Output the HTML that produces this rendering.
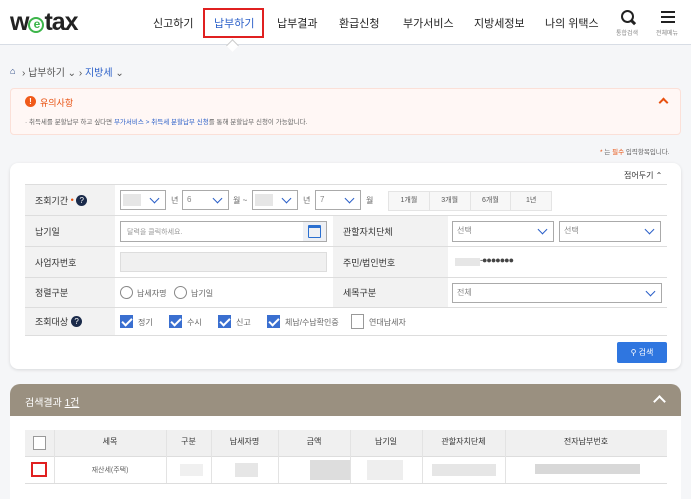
<!DOCTYPE html><html><head><meta charset="utf-8"><style>
*{box-sizing:border-box;margin:0;padding:0}
body{width:691px;height:499px;overflow:hidden;background:#f5f6f8;font-family:"Liberation Sans","Noto Sans CJK KR",sans-serif;color:#333;position:relative}
.a{position:absolute}
.hdr{left:0;top:0;width:691px;height:45px;background:#fff;border-bottom:1px solid #d8dde5}
.nav{font-size:11px;color:#222;top:15px}
.sm{font-size:8px;color:#888}
.lbl{background:#f2f2f2;font-size:9px;color:#333;padding-left:10px;display:flex;align-items:center}
.sel{border:1px solid #aaa;background:#fff;height:20px;font-size:8px;color:#888;padding-left:4px;line-height:18px}
.sel:after{content:"";position:absolute;right:7px;top:4px;width:6px;height:6px;border-right:1.5px solid #2a5fc8;border-bottom:1.5px solid #2a5fc8;transform:rotate(45deg)}
.cb{width:13px;height:13px;background:#3a6fd0;border:1px solid #3a6fd0}
.cb:after{content:"";position:absolute;left:3px;top:0px;width:4px;height:8px;border-right:2px solid #fff;border-bottom:2px solid #fff;transform:rotate(45deg)}
.t{font-size:8px;color:#666}
.th{font-size:8px;color:#333;text-align:center;top:436px}
.blur{background:#e6e6e6}
</style></head><body>
<div class="a hdr"></div>
<div class="a" style="left:10px;top:8px;font-size:25px;font-weight:bold;color:#222;letter-spacing:-1px">w<span style="display:inline-block;width:16px;height:16px;border:2.5px solid #3cb54a;border-radius:50%;font-size:12px;line-height:11px;text-align:center;color:#3cb54a;vertical-align:2px">e</span>tax</div>
<div class="a nav" style="left:153px">신고하기</div>
<div class="a" style="left:203px;top:8px;width:61px;height:30px;border:2px solid #e02020"></div>
<div class="a nav" style="left:214px;color:#2a5fc8">납부하기</div>
<div class="a" style="left:228px;top:41px;width:9px;height:9px;border-left:1px solid #ccc;border-top:1px solid #ccc;background:#fff;transform:rotate(45deg)"></div>
<div class="a nav" style="left:277px">납부결과</div>
<div class="a nav" style="left:339px">환급신청</div>
<div class="a nav" style="left:403px">부가서비스</div>
<div class="a nav" style="left:474px">지방세정보</div>
<div class="a nav" style="left:545px">나의 위택스</div>
<div class="a" style="left:621px;top:10px;width:13px;height:13px;border:2.5px solid #222;border-radius:50%"></div>
<div class="a" style="left:631px;top:21px;width:5px;height:2.5px;background:#222;transform:rotate(45deg)"></div>
<div class="a sm" style="left:616px;top:28px;font-size:6px">통합검색</div>
<div class="a" style="left:661px;top:11px;width:14px;height:2px;background:#222;box-shadow:0 5px 0 #222,0 10px 0 #222"></div>
<div class="a sm" style="left:656px;top:28px;font-size:6px">전체메뉴</div>
<div class="a" style="left:10px;top:66px;font-size:9px;color:#1a3a7a">⌂</div>
<div class="a" style="left:22px;top:64px;font-size:10px;color:#555">› 납부하기 ⌄ › <span style="color:#2a5fc8">지방세</span> ⌄</div>
<div class="a" style="left:10px;top:88px;width:671px;height:47px;background:#fff7f5;border:1px solid #fbe0d8;border-radius:4px"></div>
<div class="a" style="left:25px;top:96px;width:11px;height:11px;border-radius:50%;background:#f05a1a;color:#fff;font-size:8px;text-align:center;line-height:11px;font-weight:bold">!</div>
<div class="a" style="left:40px;top:96px;font-size:9px;color:#e8500e">유의사항</div>
<div class="a" style="left:660px;top:99px;width:7px;height:7px;border-left:2px solid #e8500e;border-top:2px solid #e8500e;transform:rotate(45deg)"></div>
<div class="a t" style="left:25px;top:116px;font-size:6.5px">· 취득세를 분할납부 하고 싶다면 <span style="color:#2a5fc8">부가서비스 &gt; 취득세 분할납부 신청</span>를 통해 분할납부 신청이 가능합니다.</div>
<div class="a t" style="left:600px;top:146px;font-size:6.5px"><span style="color:#e8500e">*</span> 는 <span style="color:#e8500e">필수</span> 입력항목입니다.</div>
<div class="a" style="left:10px;top:163px;width:671px;height:206px;background:#fff;border-radius:8px;box-shadow:0 1px 3px rgba(0,0,0,.12)"></div>
<div class="a t" style="left:624px;top:170px;color:#333">접어두기 ⌃</div>
<div class="a" style="left:25px;top:184px;width:642px;height:151px;border-top:1px solid #ddd"></div>
<div class="a lbl" style="left:25px;top:185px;width:90px;height:30px">조회기간 <span style="color:#e8500e">&nbsp;•&nbsp;</span><span style="display:inline-block;width:11px;height:11px;border-radius:50%;background:#1a2a4a;color:#fff;font-size:8px;text-align:center;line-height:11px">?</span></div>
<div class="a lbl" style="left:25px;top:216px;width:90px;height:30px">납기일</div>
<div class="a lbl" style="left:25px;top:247px;width:90px;height:30px">사업자번호</div>
<div class="a lbl" style="left:25px;top:278px;width:90px;height:29px">정렬구분</div>
<div class="a lbl" style="left:25px;top:308px;width:90px;height:27px">조회대상 <span style="display:inline-block;margin-left:3px;width:11px;height:11px;border-radius:50%;background:#1a2a4a;color:#fff;font-size:8px;text-align:center;line-height:11px">?</span></div>
<div class="a lbl" style="left:333px;top:216px;width:115px;height:30px">관할자치단체</div>
<div class="a lbl" style="left:333px;top:247px;width:115px;height:30px">주민/법인번호</div>
<div class="a lbl" style="left:333px;top:278px;width:115px;height:29px">세목구분</div>
<div class="a" style="left:25px;top:215px;width:642px;height:1px;background:#ddd;box-shadow:0 31px 0 #ddd,0 62px 0 #ddd,0 92px 0 #ddd,0 120px 0 #ddd"></div>
<div class="a sel" style="left:120px;top:190px;width:46px"></div><div class="a blur" style="left:123px;top:194px;width:18px;height:12px"></div>
<div class="a t" style="left:171px;top:195px">년</div>
<div class="a sel" style="left:182px;top:190px;width:47px">6</div>
<div class="a t" style="left:233px;top:195px">월 ~</div>
<div class="a sel" style="left:252px;top:190px;width:46px"></div><div class="a blur" style="left:255px;top:194px;width:18px;height:12px"></div>
<div class="a t" style="left:303px;top:195px">년</div>
<div class="a sel" style="left:315px;top:190px;width:46px">7</div>
<div class="a t" style="left:366px;top:195px">월</div>
<div class="a" style="left:388px;top:191px;width:164px;height:20px;border:1px solid #e4e4e4;background:#f7f7f7;display:flex;font-size:7px;color:#555">
<div style="flex:1;text-align:center;line-height:18px;border-right:1px solid #e4e4e4">1개월</div><div style="flex:1;text-align:center;line-height:18px;border-right:1px solid #e4e4e4">3개월</div><div style="flex:1;text-align:center;line-height:18px;border-right:1px solid #e4e4e4">6개월</div><div style="flex:1;text-align:center;line-height:18px">1년</div></div>
<div class="a" style="left:120px;top:221px;width:207px;height:21px;border:1px solid #aaa;font-size:7px;color:#999;padding:5px 6px">달력을 클릭하세요.</div>
<div class="a" style="left:303px;top:222px;width:23px;height:19px;background:#eef0f4"></div>
<div class="a" style="left:308px;top:225px;width:13px;height:13px;border:1.5px solid #2a6fd0;border-top-width:3px;border-radius:1px"></div>
<div class="a sel" style="left:452px;top:221px;width:102px;height:21px">선택</div>
<div class="a sel" style="left:559px;top:221px;width:102px;height:21px">선택</div>
<div class="a" style="left:120px;top:252px;width:207px;height:20px;background:#f0f0f0;border:1px solid #ddd"></div>
<div class="a blur" style="left:455px;top:258px;width:25px;height:8px"></div>
<div class="a" style="left:480px;top:255px;font-size:9px;color:#444;letter-spacing:-1px">-●●●●●●●</div>
<div class="a" style="left:120px;top:286px;width:13px;height:13px;border:1px solid #888;border-radius:50%"></div>
<div class="a t" style="left:137px;top:288px">납세자명</div>
<div class="a" style="left:174px;top:286px;width:13px;height:13px;border:1px solid #888;border-radius:50%"></div>
<div class="a t" style="left:191px;top:288px">납기일</div>
<div class="a sel" style="left:452px;top:283px;width:210px;height:20px">전체</div>
<div class="a cb" style="left:120px;top:315px"></div><div class="a t" style="left:138px;top:317px">정기</div>
<div class="a cb" style="left:169px;top:315px"></div><div class="a t" style="left:187px;top:317px">수시</div>
<div class="a cb" style="left:218px;top:315px"></div><div class="a t" style="left:236px;top:317px">신고</div>
<div class="a cb" style="left:267px;top:315px"></div><div class="a t" style="left:285px;top:317px">체납/수납확인중</div>
<div class="a" style="left:351px;top:314px;width:13px;height:15px;border:1px solid #999;background:#fff"></div><div class="a t" style="left:369px;top:317px">연대납세자</div>
<div class="a" style="left:617px;top:342px;width:50px;height:21px;background:#2f76e0;border-radius:2px;color:#fff;font-size:8px;line-height:21px;text-align:center">&#9906; 검색</div>
<div class="a" style="left:10px;top:384px;width:671px;height:115px;background:#fff;border-radius:10px 10px 0 0"></div>
<div class="a" style="left:10px;top:384px;width:671px;height:32px;background:#9a9080;border-radius:10px 10px 0 0"></div>
<div class="a" style="left:25px;top:394px;font-size:10px;color:#fff">검색결과 <span style="text-decoration:underline">1건</span></div>
<div class="a" style="left:655px;top:397px;width:9px;height:9px;border-left:2px solid #fff;border-top:2px solid #fff;transform:rotate(45deg)"></div>
<div class="a" style="left:25px;top:430px;width:642px;height:27px;background:#f0f0f0;border-bottom:1px solid #ddd"></div>
<div class="a" style="left:25px;top:483px;width:642px;height:1px;background:#ddd"></div>
<div class="a" style="left:54px;top:430px;width:1px;height:53px;background:#e3e3e3;box-shadow:112px 0 0 #e3e3e3,157px 0 0 #e3e3e3,224px 0 0 #e3e3e3,296px 0 0 #e3e3e3,368px 0 0 #e3e3e3,451px 0 0 #e3e3e3"></div>
<div class="a" style="left:33px;top:436px;width:13px;height:14px;border:1px solid #999;background:#fff"></div>
<div class="a th" style="left:54px;width:112px">세목</div>
<div class="a th" style="left:166px;width:45px">구분</div>
<div class="a th" style="left:211px;width:67px">납세자명</div>
<div class="a th" style="left:278px;width:72px">금액</div>
<div class="a th" style="left:350px;width:72px">납기일</div>
<div class="a th" style="left:422px;width:83px">관할자치단체</div>
<div class="a th" style="left:505px;width:162px">전자납부번호</div>
<div class="a" style="left:31px;top:462px;width:16px;height:15px;border:2px solid #e02020;background:#fff"></div>
<div class="a t" style="left:54px;width:112px;top:465px;text-align:center;font-size:7px">재산세(주택)</div>
<div class="a blur" style="left:180px;top:464px;width:23px;height:12px;background:#f0f0f0"></div>
<div class="a blur" style="left:235px;top:463px;width:23px;height:14px"></div>
<div class="a blur" style="left:310px;top:460px;width:40px;height:20px;background:#ddd"></div>
<div class="a blur" style="left:367px;top:460px;width:36px;height:20px;background:#eee"></div>
<div class="a blur" style="left:432px;top:464px;width:64px;height:12px"></div>
<div class="a blur" style="left:535px;top:464px;width:105px;height:10px;background:#d8d8d8"></div>
</body></html>
